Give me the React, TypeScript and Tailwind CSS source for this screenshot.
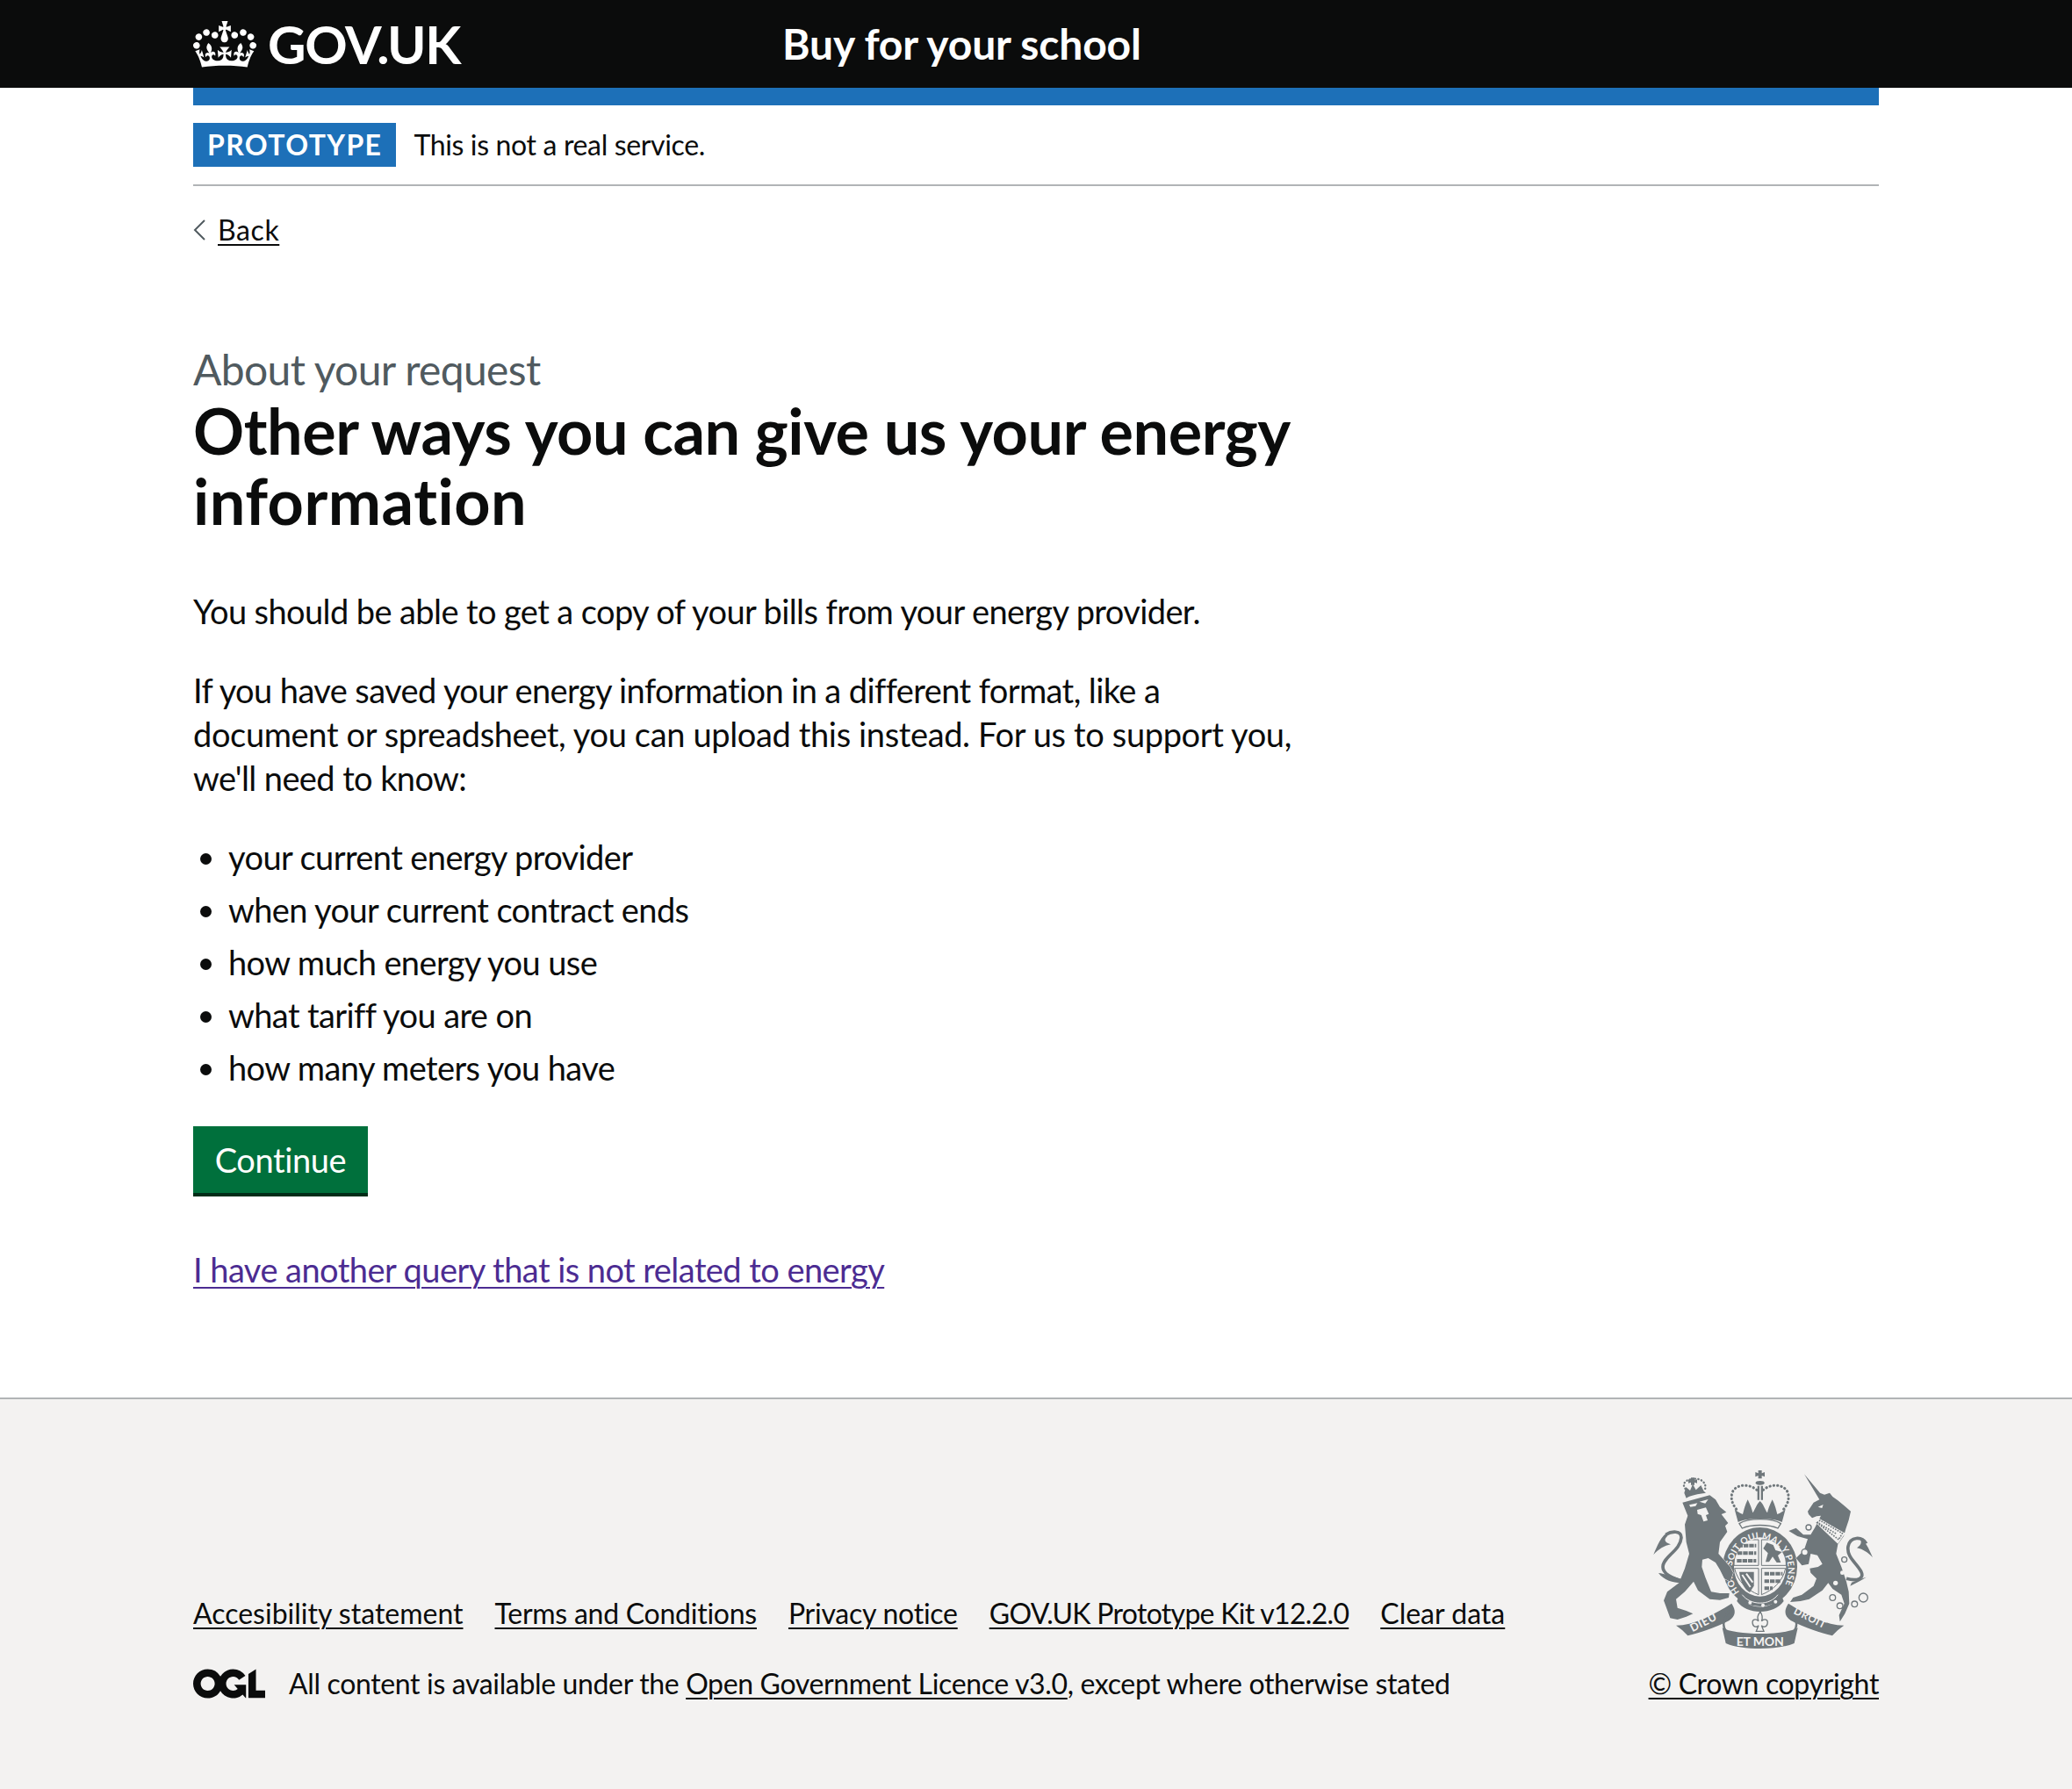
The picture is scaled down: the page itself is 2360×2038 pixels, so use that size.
// App.tsx — GOV.UK prototype page: other ways to give energy information
import React from 'react'

function Crown() {
  return (
    <svg viewBox="0 0 132 97" className="w-[72px] h-[53px] shrink-0" fill="#ffffff">
      <path
        fillRule="evenodd"
        d="M25 30.2c3.5 1.5 7.7-.2 9.1-3.7 1.5-3.6-.2-7.8-3.9-9.2-3.6-1.4-7.6.3-9.1 3.9-1.4 3.5.3 7.5 3.9 9zM9 39.5c3.6 1.5 7.8-.2 9.2-3.7 1.5-3.6-.2-7.8-3.9-9.1-3.6-1.5-7.6.2-9.1 3.8-1.4 3.5.3 7.5 3.8 9zM4.4 57.2c3.5 1.5 7.7-.2 9.1-3.8 1.5-3.6-.2-7.7-3.9-9.1-3.5-1.5-7.6.3-9.1 3.8-1.4 3.5.3 7.6 3.9 9.1zm38.3-21.4c3.5 1.5 7.7-.2 9.1-3.8 1.5-3.6-.2-7.7-3.9-9.1-3.6-1.5-7.6.3-9.1 3.8-1.3 3.6.4 7.7 3.9 9.1zm64.4-5.6c-3.6 1.5-7.8-.2-9.1-3.7-1.5-3.6.2-7.8 3.8-9.2 3.6-1.4 7.7.3 9.2 3.9 1.3 3.5-.4 7.5-3.9 9zm15.9 9.3c-3.6 1.5-7.7-.2-9.1-3.7-1.5-3.6.2-7.8 3.7-9.1 3.6-1.5 7.7.2 9.2 3.8 1.5 3.5-.3 7.5-3.8 9zm4.7 17.7c-3.6 1.5-7.8-.2-9.2-3.8-1.5-3.6.2-7.7 3.9-9.1 3.6-1.5 7.7.3 9.2 3.8 1.3 3.5-.4 7.6-3.9 9.1zM89.3 35.8c-3.6 1.5-7.8-.2-9.2-3.8-1.4-3.6.2-7.7 3.9-9.1 3.6-1.5 7.7.3 9.2 3.8 1.4 3.6-.3 7.7-3.9 9.1zM69.7 17.7l8.9 4.7V9.3l-8.9 2.8c-.2-.3-.5-.6-.9-.9L72.4 0H59.6l3.6 11.2c-.3.3-.6.5-.9.9l-8.8-2.8v13.1l8.8-4.7c.3.3.6.7.9.9l-5 15.4v.1c-.2.8-.4 1.6-.4 2.4 0 4.1 3.1 7.5 7 8.1h1.2c4-.6 7-4 7-8.1 0-.8-.1-1.7-.4-2.4V34l-5.1-15.4c.4-.2.7-.6 1-.9zM66 92.8c16.9 0 32.8 1.1 47.1 3.2 4-16.9 8.9-26.7 14-33.5l-9.6-3.4c1 4.9 1.1 7.2 0 10.2-1.5-1.4-3-4.3-4.2-8.7L108.6 76c2.8-2 5-3.2 7.5-3.3-4.4 9.4-10 11.9-13.6 11.2-4.3-.8-6.3-4.6-5.6-7.9 1-4.7 5.7-5.9 8-.5 4.3-8.7-3-11.4-7.6-8.8 7.1-7.2 7.9-13.5 2.1-21.1-8 6.1-8.1 12.3-4.5 20.8-4.7-5.4-12.1-2.5-9.5 6.2 3.4-5.2 7.9-2 7.2 3.1-.6 4.3-6.4 7.8-13.5 7.2-10.3-.9-10.9-8-11.2-13.8 2.5-.5 7.1 1.8 11 7.3L80.2 60c-4.1 4.4-8 5.3-12.3 5.4 1.4-4.4 8-11.6 8-11.6H55.5s6.4 7.2 7.9 11.6c-4.2-.1-8-1-12.3-5.4l1.4 16.4c3.9-5.5 8.5-7.7 10.9-7.3-.3 5.8-.9 12.8-11.1 13.8-7.2.6-12.9-2.9-13.5-7.2-.7-5 3.8-8.3 7.1-3.1 2.7-8.7-4.6-11.6-9.4-6.2 3.7-8.5 3.6-14.7-4.6-20.8-5.8 7.6-5 13.9 2.2 21.1-4.7-2.6-11.9.1-7.7 8.8 2.3-5.5 7.1-4.2 8.1.5.7 3.3-1.3 7.1-5.7 7.9-3.5.7-9-1.8-13.5-11.2 2.5.1 4.7 1.3 7.5 3.3l-4.7-15.4c-1.2 4.4-2.7 7.2-4.3 8.7-1.1-3-.9-5.3 0-10.2l-9.5 3.4c5 6.9 9.9 16.7 14 33.5 14.8-2.1 30.8-3.2 47.7-3.2z"
      />
    </svg>
  )
}

function OglLogo() {
  return (
    <svg viewBox="0 0 483.2 195.7" className="w-[82px] h-[34px] shrink-0" fill="#0b0c0c">
      <path d="M421.5 142.8V.1l-50.7 32.3v161.1h112.4v-50.7zm-122.3-9.6A47.12 47.12 0 0 1 221 97.8c0-26 21.1-47.1 47.1-47.1 16.7 0 31.4 8.7 39.7 21.8l42.7-27.2A97.63 97.63 0 0 0 268.1 0c-36.5 0-68.3 20.1-85.1 49.7A98 98 0 0 0 97.8 0C43.9 0 0 43.9 0 97.8s43.9 97.8 97.8 97.8c36.5 0 68.3-20.1 85.1-49.7a97.76 97.76 0 0 0 149.6 25.4l19.4 22.2h3v-87.8h-80l24.3 27.5zM97.8 145c-26 0-47.1-21.1-47.1-47.1s21.1-47.1 47.1-47.1 47.2 21 47.2 47S123.8 145 97.8 145" />
    </svg>
  )
}

// Royal coat of arms, drawn by hand in the footer grey (viewBox is 3x its pixel size)
function CoatOfArms() {
  const grey = '#6f777b'
  const bg = '#f3f2f1'
  return (
    <svg viewBox="0 0 780 636" className="w-[260px] h-[212px] shrink-0" fill={grey}>
      {/* --- centre crown --- */}
      <path d="M371 15h12v10l10-4v16l-10-4v10h-12v-10l-10 4V21l10 4z" />
      <ellipse cx="377" cy="58" rx="15" ry="7" />
      <path d="M368 68h7v48h-7zM380 68h7v48h-7z" />
      <path d="M366 82C340 60 300 62 285 85C272 110 285 135 298 150" fill="none" stroke={grey} strokeWidth="9" strokeDasharray="1 12" strokeLinecap="round" />
      <path d="M388 82C414 60 454 62 469 85C482 110 469 135 456 150" fill="none" stroke={grey} strokeWidth="9" strokeDasharray="1 12" strokeLinecap="round" />
      <path d="M290 148C298 155 305 160 318 165C322 150 325 135 335 115C345 135 350 150 352 160C360 150 365 130 377 120C389 130 394 150 402 160C404 150 409 135 419 115C429 135 432 150 436 165C449 160 456 155 464 148L452 192C420 176 334 176 302 192z" />
      <path d="M306 197C335 177 420 177 448 197L438 213C410 199 344 199 316 213z" fill={bg} stroke={grey} strokeWidth="4" />

      {/* --- garter and shield --- */}
      <ellipse cx="377" cy="345" rx="127" ry="135" />
      <path d="M305 442C340 495 415 495 450 442L458 462C425 510 330 510 298 462z" />
      <path d="M316 440C345 478 410 478 438 440" fill="none" stroke={bg} strokeWidth="3" />
      <circle cx="343" cy="467" r="6" fill={bg} />
      <circle cx="387" cy="476" r="6" fill={bg} />
      <circle cx="430" cy="464" r="6" fill={bg} />
      <ellipse cx="377" cy="345" rx="89" ry="101" fill={bg} />
      <path d="M297 252H372V340H288C288 300 285 275 297 252zM382 252H458C470 275 466 300 466 340H382zM290 350H372V440C335 425 300 395 290 350zM382 350H464C455 395 420 425 382 440z" fill="none" stroke={grey} strokeWidth="3" />
      <path d="M302 272h62M300 298h64M298 324h66M392 368h62M392 394h54M392 418h28" stroke={grey} strokeWidth="12" strokeDasharray="16 3" />
      <path d="M400 262l22 8 8 18 22 6-14 12 10 24h-14l-14-20-12 18h-12l8-30-16-16z" />
      <path d="M306 362h50v48l-14 22c-18-10-32-36-36-70z" />
      <path d="M316 372l28 42M330 368l22 30" stroke={bg} strokeWidth="6" />
      <path id="garter" d="M307 431A96 108 0 1 1 447 431" fill="none" />
      <text fontFamily="Lato, sans-serif" fontWeight="700" fontSize="31" fill={bg} letterSpacing="1">
        <textPath href="#garter">HONI SOIT QUI MAL Y PENSE</textPath>
      </text>

      {/* --- lion --- */}
      <path d="M118 92L124 72L138 84L147 62L158 82L175 66L185 86L192 92C165 95 140 100 125 110z" />
      <path d="M141 40h12v9l9-3v13l-9-3v9h-12v-9l-9 3V46l9 3z" />
      <path d="M122 78C108 60 125 48 140 46M155 44C175 42 198 60 188 82" fill="none" stroke={grey} strokeWidth="7" strokeDasharray="1 10" strokeLinecap="round" />
      <path
        d="M112 125L205 100L225 115L240 140L262 158L245 165L268 195L258 205L265 225L240 260L235 300L275 345L285 365L275 395L255 385L240 355L225 330L200 315L180 320L178 345L190 380L210 430L240 435L272 435L270 450L240 458L205 455L165 425L150 395L120 430L90 455L95 485L125 495L148 505L125 515L95 525L70 520L48 460L60 430L100 400L120 350L135 300L125 260L120 200L130 170z"
        stroke={bg}
        strokeWidth="3"
        paintOrder="stroke"
      />
      <path d="M135 133l28-6-6 10-18 3zM170 122l30-8-10 14zM162 150l30-8 10 22-10 4 6 18-14 4-8-22-12-4z" fill={bg} />
      <path d="M115 395C80 385 45 370 45 345C45 310 105 290 108 245C108 220 75 222 55 235" fill="none" stroke={grey} strokeWidth="11" />
      <path d="M65 226C40 235 25 275 13 303C30 285 50 272 72 268C55 262 45 255 60 240zM30 366C50 368 80 378 112 388L106 400C80 398 50 392 30 366z" />

      {/* --- unicorn --- */}
      <path
        d="M528 28L582 92L597 98L615 92L625 105L643 118L670 140L687 155L680 185L670 215L663 240L643 268L637 300L655 345L672 395L680 430L682 470L667 505L650 532L647 510L665 470L655 440L625 420L610 400L590 425L545 455L515 462L480 465L490 450L520 440L560 410L570 385L550 365L547 350L575 345L590 335L573 305L550 300L543 335L520 340L500 315L515 300L525 295L540 250L505 240L475 222L500 212L525 235L550 235L565 210L575 190L585 170L570 172L555 178L543 165L540 155L560 125L580 115z"
        stroke={bg}
        strokeWidth="3"
        paintOrder="stroke"
      />
      <path d="M575 140l18-8-4 12z" fill={bg} />
      <path d="M565 192L580 180L668 230L643 266z" fill={bg} />
      <path d="M572 194l10-8 76 44-12 22zM578 196l60 36" fill="none" stroke={grey} strokeWidth="5" strokeDasharray="5 4" />
      <circle cx="543" cy="210" r="9" fill={bg} stroke={grey} strokeWidth="4" />
      <circle cx="530" cy="295" r="11" fill={bg} stroke={grey} strokeWidth="4" />
      <circle cx="665" cy="320" r="9" fill={bg} stroke={grey} strokeWidth="4" />
      <circle cx="658" cy="365" r="7" fill={bg} />
      <circle cx="635" cy="400" r="8" fill={bg} />
      <circle cx="625" cy="450" r="10" fill="none" stroke={grey} strokeWidth="4" />
      <circle cx="650" cy="478" r="10" fill="none" stroke={grey} strokeWidth="4" />
      <circle cx="700" cy="472" r="10" fill="none" stroke={grey} strokeWidth="4" />
      <circle cx="730" cy="450" r="15" fill="none" stroke={grey} strokeWidth="4" />
      <path d="M672 385C710 395 735 385 722 360C705 330 672 310 678 275C685 240 725 240 740 265" fill="none" stroke={grey} strokeWidth="11" />
      <path d="M715 245C735 250 750 285 762 313C745 295 730 285 708 280C722 270 728 260 715 245zM740 380C725 390 705 400 685 410L690 398C705 392 725 385 740 380z" />

      {/* --- motto ribbon --- */}
      <path d="M90 545C150 545 215 510 280 470C296 495 294 512 272 528C220 555 170 570 130 580C120 568 105 555 90 545z" />
      <path d="M664 545C604 545 539 510 474 470C458 495 460 512 482 528C534 555 584 570 624 580C634 568 649 555 664 545z" />
      <path d="M283 482C258 510 240 540 262 566M471 482C496 510 514 540 492 566" fill="none" stroke={grey} strokeWidth="7" />
      <path d="M248 553C290 580 464 580 506 553L494 606C440 630 314 630 260 606z" />
      <path d="M377 499C368 510 368 522 372 530C362 520 348 525 352 540C355 552 368 552 372 545L364 565H390L382 545C386 552 399 552 402 540C406 525 392 520 382 530C386 522 386 510 377 497z" fill={bg} stroke={grey} strokeWidth="4" />
      <g fontFamily="Lato, sans-serif" fontWeight="700" fill={bg}>
        <text x="146" y="568" fontSize="38" letterSpacing="2" transform="rotate(-27 146 568)">DIEU</text>
        <text x="377" y="616" fontSize="42" textAnchor="middle">ET MON</text>
        <text x="490" y="503" fontSize="35" letterSpacing="2" transform="rotate(27 490 503)">DROIT</text>
      </g>
    </svg>
  )
}

const listItems = [
  'your current energy provider',
  'when your current contract ends',
  'how much energy you use',
  'what tariff you are on',
  'how many meters you have',
]

const footerLinks = [
  { label: 'Accesibility statement', tracking: 'tracking-[0px]' },
  { label: 'Terms and Conditions', tracking: 'tracking-[-0.25px]' },
  { label: 'Privacy notice', tracking: 'tracking-[-0.25px]' },
  { label: 'GOV.UK Prototype Kit v12.2.0', tracking: 'tracking-[-0.7px]' },
  { label: 'Clear data', tracking: 'tracking-[0.01px]' },
]

export default function App() {
  return (
    <div className="min-h-[2038px] flex flex-col bg-white text-[#0b0c0c] font-['Lato',sans-serif]">
      {/* --- Header --- */}
      <header className="h-[100px] bg-[#0b0c0c] px-[220px] flex items-center text-white">
        <div className="w-[671px] flex items-center gap-[13px]">
          <Crown />
          <span className="text-[60px] leading-none font-bold tracking-[-1.3px]">GOV.UK</span>
        </div>
        <span className="text-[48px] leading-none font-bold tracking-[-0.15px]">Buy for your school</span>
      </header>

      <div className="mx-[220px] flex-1">
        <div className="h-5 bg-[#1d70b8]" />

        {/* --- Phase banner --- */}
        <div className="flex items-center gap-5 h-[92px] border-b-2 border-[#b1b4b6]">
          <strong className="h-[50px] px-4 bg-[#1d70b8] text-white text-[32px] leading-[50px] font-bold tracking-[1.4px]">PROTOTYPE</strong>
          <span className="text-[32px] leading-10 tracking-[-0.35px]">This is not a real service.</span>
        </div>

        {/* --- Back link --- */}
        <a className="mt-[30px] flex items-center h-10 text-[32px] leading-10 tracking-[0.6px]">
          <svg viewBox="0 0 14 24" className="w-[14px] h-6 mr-[14px]" fill="none" stroke="#505a5f" strokeWidth="2">
            <path d="M13 1L2 12l11 11" />
          </svg>
          <span className="underline underline-offset-[4px] decoration-2">Back</span>
        </a>

        {/* --- Main column --- */}
        <main className="w-[1290px] mt-[114px]">
          <div className="text-[48px] leading-[50px] text-[#505a5f] tracking-[-0.65px]">About your request</div>
          <h1 className="text-[72px] leading-[80px] font-bold tracking-[-0.45px] mt-[4px] mb-[61px]">
            Other ways you can give us your energy <span className="tracking-[0.5px]">information</span>
          </h1>

          <p className="text-[38px] leading-[50px] mb-10 tracking-[-0.6px]">You should be able to get a copy of your bills from your energy provider.</p>
          <p className="text-[38px] leading-[50px] mb-10 tracking-[-0.6px]">
            If you have saved your energy information in a different format, like a
            <br />
            <span className="tracking-[-0.36px]">document or spreadsheet, you can upload this instead. For us to support you,</span>
            <br />
            we'll need to know:
          </p>

          <ul className="list-disc pl-10 text-[38px] leading-[50px] tracking-[-0.6px]">
            {listItems.map((item) => (
              <li key={item} className="mb-[10px]">{item}</li>
            ))}
          </ul>

          <button className="mt-8 h-20 w-[199px] bg-[#00703c] border-b-4 border-[#002d18] text-white text-[38px] leading-none tracking-[-0.4px]">
            Continue
          </button>

          <a className="block mt-[58px] text-[38px] leading-[50px] text-[#4c2c92] underline underline-offset-[5px] decoration-2 tracking-[-0.55px]">
            I have another query that is not related to energy
          </a>
        </main>
      </div>

      {/* --- Footer --- */}
      <footer className="h-[446px] bg-[#f3f2f1] border-t-2 border-[#b1b4b6] px-[220px] pt-[76px] flex justify-between items-start text-[32px] leading-10">
        <div className="pt-[148px]">
          <div className="flex gap-9">
            {footerLinks.map((link) => (
              <a key={link.label} className={`underline underline-offset-[4px] decoration-2 ${link.tracking}`}>{link.label}</a>
            ))}
          </div>
          <div className="flex items-center gap-[27px] mt-10 tracking-[-0.35px]">
            <OglLogo />
            <span>
              All content is available under the <a className="underline underline-offset-[4px] decoration-2">Open Government Licence v3.0</a>, except where otherwise stated
            </span>
          </div>
        </div>
        <div className="flex flex-col items-center tracking-[-0.35px]">
          <CoatOfArms />
          <a className="mt-4 underline underline-offset-[4px] decoration-2">© Crown copyright</a>
        </div>
      </footer>
    </div>
  )
}
